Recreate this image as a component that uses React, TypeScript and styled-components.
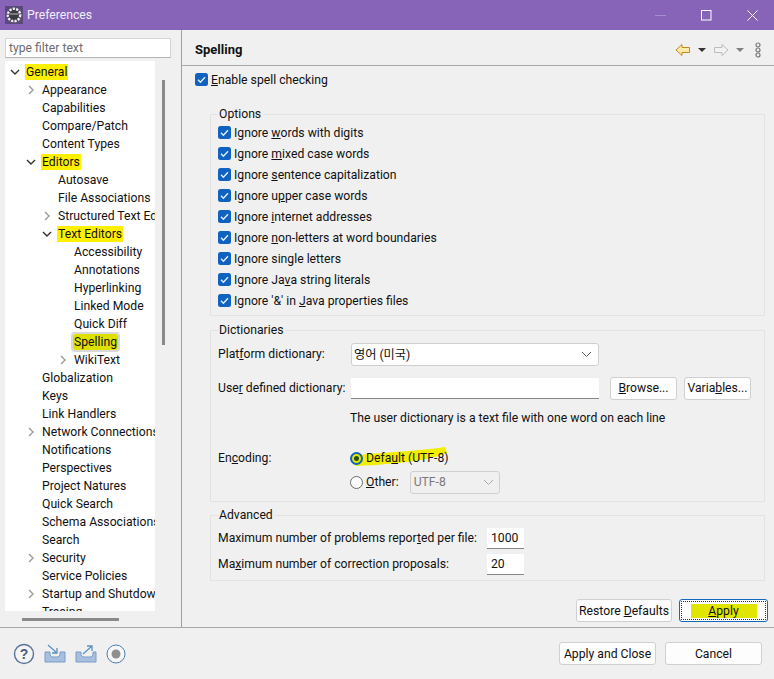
import React from "react";
import styled, { createGlobalStyle } from "styled-components";

const Global = createGlobalStyle`
  html, body { margin: 0; padding: 0; background: #f0f0f0; }
  body { font-family: Roboto, "Noto Sans CJK KR", sans-serif; font-size: 12.2px; color: #1a1a1a; }
  u { text-underline-offset: 1px; }
`;

const Window = styled.div`
  width: 774px; height: 679px; display: flex; flex-direction: column; overflow: hidden; background: #f0f0f0;
`;
const TitleBar = styled.div`
  height: 30px; flex: none; background: #8764b8; display: flex; align-items: center; padding-left: 5px; color: #f2edf8;
`;
const TitleText = styled.span` margin-left: 4px; flex: 1; `;
const WinButton = styled.div`
  width: 46px; height: 30px; display: flex; align-items: center; justify-content: center;
  &:last-child { margin-right: -1px; }
`;
const Body = styled.div` flex: 1; display: flex; min-height: 0; `;
const Side = styled.div`
  flex: none; border-right: 1px solid #a0a0a0; padding: 8px 0 0 5px; box-sizing: border-box; width: 182px;
  display: flex; flex-direction: column;
`;
const Filter = styled.div`
  width: 166px; height: 20px; box-sizing: border-box; background: #fff; border: 1px solid #d4d4d4; border-bottom-color: #b4b4b4;
  color: #6d6d6d; padding-left: 3px; line-height: 18px;
`;
const TreeWrap = styled.div` margin-top: 3px; display: flex; width: 166px; height: 550px; `;
const Tree = styled.div` width: 150px; height: 550px; background: #fff; overflow: hidden; padding-top: 2px; box-sizing: border-box; `;
const VTrack = styled.div` width: 16px; height: 550px; display: flex; justify-content: center; padding-top: 19px; box-sizing: border-box; `;
const VThumb = styled.div` width: 3px; height: 265px; background: #8a8a8a; `;
const HTrack = styled.div` height: 16px; width: 166px; padding: 7px 0 0 17px; box-sizing: border-box; `;
const HThumb = styled.div` width: 97px; height: 3px; background: #8a8a8a; `;
const Row = styled.div<{ $level: number }>`
  height: 18px; display: flex; align-items: center; white-space: nowrap; padding-left: ${p => 5 + p.$level * 16}px; color: #111;
`;
const Twist = styled.span` width: 16px; flex: none; display: flex; align-items: center; justify-content: flex-start; `;
const Label = styled.span<{ $mark?: "y" | "sel" }>`
  line-height: 16px;
  ${p => p.$mark === "y" ? "background: #fff000; padding: 0 1px; margin-left: -1px;" : ""}
  ${p => p.$mark === "sel" ? "background: #dde000; padding: 0 1px; margin-left: -1px; outline: 2px solid #d8d8d8; border-radius: 2px;" : ""}
`;

const Main = styled.div` flex: 1; display: flex; flex-direction: column; min-width: 0; `;
const Head = styled.div`
  height: 36px; flex: none; border-bottom: 1px solid #a8a8a8; display: flex; align-items: center; padding: 4px 12px 0 13px; box-sizing: border-box;
`;
const HeadTitle = styled.div` font-weight: 700; flex: 1; font-size: 13px; color: #111; `;
const HeadIcons = styled.div` display: flex; align-items: center; `;
const Dots = styled.svg` margin-left: 3px; `;
const Content = styled.div` flex: 1; display: flex; flex-direction: column; padding: 3px 9px 0 13px; min-height: 0; `;
const CheckRow = styled.div`
  display: flex; align-items: center; height: 21px; color: #111; white-space: nowrap;
`;
const Box = styled.span`
  width: 13px; height: 13px; background: #0f62bf; border-radius: 2.5px; margin-right: 3px; flex: none; display: flex; align-items: center; justify-content: center;
`;
const Group = styled.fieldset<{ $h: number; $mt: number }>`
  margin: ${p => p.$mt}px 0 0 15px; width: 555px; height: ${p => p.$h}px; box-sizing: border-box; padding: 0 7px; border: 1.5px solid #e3e3e3;
  min-width: 0;
`;
const Legend = styled.legend` padding: 0 2px 0 1px; margin-left: 0; line-height: 14px; color: #111; `;
const OptionList = styled.div` margin-top: 1px; `;
const FormRow = styled.div<{ $h: number; $mt?: number }>`
  display: flex; align-items: center; height: ${p => p.$h}px; margin-top: ${p => p.$mt ?? 0}px; white-space: nowrap; color: #111;
`;
const FieldLabel = styled.span<{ $w: number }>` width: ${p => p.$w}px; flex: none; `;
const Select = styled.div`
  width: 248px; height: 23px; box-sizing: border-box; background: #fff; border: 1px solid #cfcfcf; border-radius: 3px; padding: 0 6px 0 2px;
  display: flex; align-items: center; justify-content: space-between;
`;
const TextField = styled.div<{ $w: number }>`
  width: ${p => p.$w}px; height: 21px; box-sizing: border-box; background: #fff; border-bottom: 1px solid #868686; padding: 0 5px 0 4px; line-height: 20px; color: #111;
`;
const Btn = styled.div<{ $w: number; $primary?: boolean; $ml?: number }>`
  width: ${p => p.$w}px; height: 23px; box-sizing: border-box; background: #fdfdfd; display: flex; align-items: center; justify-content: center; flex: none;
  border: 1px solid #d0d0d0; border-radius: 3px; margin-left: ${p => p.$ml ?? 0}px; color: #111; white-space: nowrap;
  ${p => p.$primary ? "border: 1.5px solid #1468c0; outline: 1px dotted #333; outline-offset: -3px;" : ""}
`;
const ApplyMark = styled.span`
  background: #e0e600; width: 66px; height: 14px; line-height: 14px; text-align: center;
`;
const RadioOuter = styled.span<{ $on?: boolean }>`
  width: 13px; height: 13px; border-radius: 50%; box-sizing: border-box; flex: none; margin-right: 3px; position: relative; z-index: 1;
  ${p => p.$on
    ? "background: radial-gradient(circle, #22501c 0 2px, #e4e600 3px); border: 2.5px solid #0f62bf;"
    : "background: #fff; border: 1px solid #6a6a6a;"}
`;
const DisabledSelect = styled.div`
  width: 90px; height: 23px; box-sizing: border-box; background: #f0f0f0; border: 1px solid #d0d0d0; border-radius: 3px; margin-left: 11px; color: #7a7a7a;
  display: flex; align-items: center; justify-content: space-between; padding: 0 5px 0 3px;
`;
const Brush = styled.svg` position: absolute; left: 0; top: -7px; pointer-events: none; `;
const DefaultLabel = styled.span` position: relative; z-index: 1; `;
const BrushHolder = styled.span` position: relative; display: inline-flex; align-items: center; height: 16px; `;
const Note = styled.div` margin-left: 132px; color: #111; `;
const ActionRow = styled.div`
  display: flex; justify-content: flex-end; margin: 18px -3px 0 0;
`;
const Footer = styled.div`
  height: 51px; flex: none; border-top: 1px solid #a8a8a8; display: flex; align-items: center; padding: 0 12px 0 13px;
`;
const FooterIcons = styled.div` display: flex; align-items: center; gap: 9px; flex: 1; `;

const Chevron = ({ open }: { open?: boolean }) => open ? (
  <svg width="10" height="10" viewBox="0 0 10 10"><path d="M1 3l4 4 4-4" fill="none" stroke="#333" strokeWidth="1.4" /></svg>
) : (
  <svg width="10" height="10" viewBox="0 0 10 10"><path d="M3 1l4 4-4 4" fill="none" stroke="#9a9a9a" strokeWidth="1.4" /></svg>
);
const Down = ({ c = "#555" }: { c?: string }) => (
  <svg width="11" height="7" viewBox="0 0 11 7"><path d="M1 1l4.500 4.500L10 1" fill="none" stroke={c} strokeWidth="1" /></svg>
);
const Tick = () => (
  <svg width="11" height="11" viewBox="0 0 11 11"><path d="M2 5.800l2.400 2.400L9 3.200" fill="none" stroke="#dfeefb" strokeWidth="1.4" /></svg>
);

type Item = { t: string; l: number; c?: "o" | "c"; m?: "y" | "sel" };
const items: Item[] = [
  { t: "General", l: 0, c: "o", m: "y" },
  { t: "Appearance", l: 1, c: "c" },
  { t: "Capabilities", l: 1 },
  { t: "Compare/Patch", l: 1 },
  { t: "Content Types", l: 1 },
  { t: "Editors", l: 1, c: "o", m: "y" },
  { t: "Autosave", l: 2 },
  { t: "File Associations", l: 2 },
  { t: "Structured Text Editors", l: 2, c: "c" },
  { t: "Text Editors", l: 2, c: "o", m: "y" },
  { t: "Accessibility", l: 3 },
  { t: "Annotations", l: 3 },
  { t: "Hyperlinking", l: 3 },
  { t: "Linked Mode", l: 3 },
  { t: "Quick Diff", l: 3 },
  { t: "Spelling", l: 3, m: "sel" },
  { t: "WikiText", l: 3, c: "c" },
  { t: "Globalization", l: 1 },
  { t: "Keys", l: 1 },
  { t: "Link Handlers", l: 1 },
  { t: "Network Connections", l: 1, c: "c" },
  { t: "Notifications", l: 1 },
  { t: "Perspectives", l: 1 },
  { t: "Project Natures", l: 1 },
  { t: "Quick Search", l: 1 },
  { t: "Schema Associations", l: 1 },
  { t: "Search", l: 1 },
  { t: "Security", l: 1, c: "c" },
  { t: "Service Policies", l: 1 },
  { t: "Startup and Shutdown", l: 1, c: "c" },
  { t: "Tracing", l: 1 },
];

const options: React.ReactNode[] = [
  <>Ignore <u>w</u>ords with digits</>,
  <>Ignore <u>m</u>ixed case words</>,
  <>Ignore <u>s</u>entence capitalization</>,
  <>Ignore u<u>p</u>per case words</>,
  <>Ignore <u>i</u>nternet addresses</>,
  <>Ignore <u>n</u>on-letters at word boundaries</>,
  <>I<u>g</u>nore single letters</>,
  <>Ignore Ja<u>v</u>a string literals</>,
  <>Ignore '&amp;' in <u>J</u>ava properties files</>,
];

export default function App() {
  return (
    <Window>
      <Global />
      <TitleBar>
        <svg width="18" height="18" viewBox="0 0 18 18">
          <rect width="18" height="18" fill="#5a4a78" />
          <circle cx="9" cy="9" r="6.2" fill="#3c3a44" stroke="#f0f0f0" strokeWidth="2.4" strokeDasharray="2.2 1.2" />
          <path d="M4.500 8h9" stroke="#bbb" strokeWidth="1" />
        </svg>
        <TitleText>Preferences</TitleText>
        <WinButton><svg width="11" height="11"><path d="M0 5.500h11" stroke="#a68fd0" /></svg></WinButton>
        <WinButton><svg width="11" height="11"><rect x=".5" y=".5" width="9.500" height="9.500" fill="none" stroke="#fff" /></svg></WinButton>
        <WinButton><svg width="11" height="11"><path d="M.5.5l10 10M10.500.5l-10 10" stroke="#fff" /></svg></WinButton>
      </TitleBar>
      <Body>
        <Side>
          <Filter>type filter text</Filter>
          <TreeWrap>
            <Tree>
              {items.map(i => (
                <Row key={i.t} $level={i.l}>
                  <Twist>{i.c && <Chevron open={i.c === "o"} />}</Twist>
                  <Label $mark={i.m}>{i.t}</Label>
                </Row>
              ))}
            </Tree>
            <VTrack><VThumb /></VTrack>
          </TreeWrap>
          <HTrack><HThumb /></HTrack>
        </Side>
        <Main>
          <Head>
            <HeadTitle>Spelling</HeadTitle>
            <HeadIcons>
              <svg width="16" height="14" viewBox="0 0 16 14"><path d="M1 7l6-5.500V4.500h7.500v5H7v3z" fill="#fde9a8" stroke="#c08a20" /></svg>
              <svg width="22" height="8" viewBox="0 0 22 8"><path d="M7 2h8l-4 4z" fill="#333" /></svg>
              <svg width="16" height="14" viewBox="0 0 16 14"><path d="M15 7L9 1.500V4.500H1.500v5H9v3z" fill="#f2f2f2" stroke="#bcbcbc" /></svg>
              <svg width="22" height="8" viewBox="0 0 22 8"><path d="M7 2h8l-4 4z" fill="#808080" /></svg>
              <Dots width="8" height="16" viewBox="0 0 8 16"><g fill="none" stroke="#777" strokeWidth="1.200"><circle cx="4" cy="3" r="2" /><circle cx="4" cy="8" r="2" /><circle cx="4" cy="13" r="2" /></g></Dots>
            </HeadIcons>
          </Head>
          <Content>
            <CheckRow><Box><Tick /></Box><span><u>E</u>nable spell checking</span></CheckRow>
            <Group $h={209} $mt={17}>
              <Legend>Options</Legend>
              <OptionList>
                {options.map((o, i) => (
                  <CheckRow key={i}><Box><Tick /></Box><span>{o}</span></CheckRow>
                ))}
              </OptionList>
            </Group>
            <Group $h={179} $mt={7}>
              <Legend>Dictionaries</Legend>
              <FormRow $h={28} $mt={3}>
                <FieldLabel $w={133}>Plat<u>f</u>orm dictionary:</FieldLabel>
                <Select><span>영어 (미국)</span><Down /></Select>
              </FormRow>
              <FormRow $h={28} $mt={6}>
                <FieldLabel $w={133}>Use<u>r</u> defined dictionary:</FieldLabel>
                <TextField $w={248} />
                <Btn $w={67} $ml={11}><span><u>B</u>rowse...</span></Btn>
                <Btn $w={67} $ml={7}><span>Varia<u>b</u>les...</span></Btn>
              </FormRow>
              <FormRow $h={20} $mt={6}><Note>The user dictionary is a text file with one word on each line</Note></FormRow>
              <FormRow $h={20} $mt={20}>
                <FieldLabel $w={132}>En<u>c</u>oding:</FieldLabel>
                <BrushHolder>
                  <Brush width="100" height="26" viewBox="0 0 100 26">
                    <path d="M1 13 C20 10 60 9 95 4 L97 10 C80 17 50 21 6 23 Q0 20 1 13z" fill="#f1ee00" />
                  </Brush>
                  <RadioOuter $on />
                  <DefaultLabel>Defa<u>u</u>lt (UTF-8)</DefaultLabel>
                </BrushHolder>
              </FormRow>
              <FormRow $h={28}>
                <FieldLabel $w={132} />
                <RadioOuter /><span><u>O</u>ther:</span>
                <DisabledSelect><span>UTF-8</span><Down c="#aaa" /></DisabledSelect>
              </FormRow>
            </Group>
            <Group $h={73} $mt={6}>
              <Legend>Advanced</Legend>
              <FormRow $h={24} $mt={4}>
                <FieldLabel $w={269}>Maximum number of problems repor<u>t</u>ed per file:</FieldLabel>
                <TextField $w={37}>1000</TextField>
              </FormRow>
              <FormRow $h={28}>
                <FieldLabel $w={269}>Ma<u>x</u>imum number of correction proposals:</FieldLabel>
                <TextField $w={37}>20</TextField>
              </FormRow>
            </Group>
            <ActionRow>
              <Btn $w={96}><span>Restore <u>D</u>efaults</span></Btn>
              <Btn $w={89} $ml={7} $primary>
                <ApplyMark><u>A</u>pply</ApplyMark>
              </Btn>
            </ActionRow>
          </Content>
        </Main>
      </Body>
      <Footer>
        <FooterIcons>
          <svg width="22" height="22" viewBox="0 0 22 22"><circle cx="11" cy="11" r="9.500" fill="#fff" fillOpacity=".3" stroke="#5a7298" strokeWidth="1.400" /><text x="11" y="16" textAnchor="middle" fontSize="14" fontWeight="700" fill="#4a5c80" fontFamily="Liberation Sans">?</text></svg>
          <svg width="22" height="20" viewBox="0 0 22 20"><path d="M1 8v10h20V8h-5v3l-2 2H8L6 11V8z" fill="#a8c0e0" stroke="#7a9ac8" /><path d="M4 1l9 8M13 4v5H8" fill="none" stroke="#5a93c0" strokeWidth="1.300" /></svg>
          <svg width="22" height="20" viewBox="0 0 22 20"><path d="M1 8v10h20V8h-3v3l-2 2H8L6 11V8z" fill="#a8c0e0" stroke="#7a9ac8" /><path d="M8 10l9-8M12 2h5v5" fill="none" stroke="#5a93c0" strokeWidth="1.300" /></svg>
          <svg width="20" height="20" viewBox="0 0 20 20"><circle cx="10" cy="10" r="9" fill="#f6f6f6" stroke="#4a7fb0" /><circle cx="10" cy="10" r="4.500" fill="#8f8f8f" /></svg>
        </FooterIcons>
        <Btn $w={97} $ml={0}><span>Apply and Close</span></Btn>
        <Btn $w={97} $ml={9}><span>Cancel</span></Btn>
      </Footer>
    </Window>
  );
}
